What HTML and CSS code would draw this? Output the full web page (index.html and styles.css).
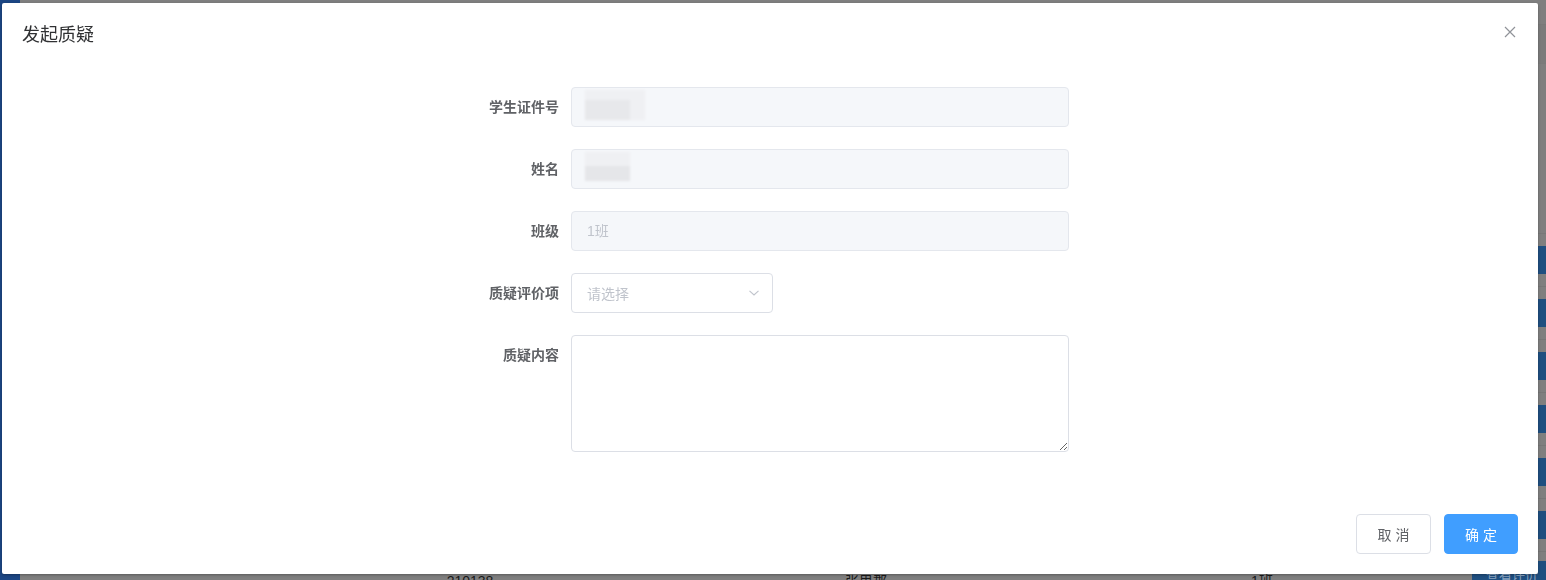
FILE: index.html
```html
<!DOCTYPE html>
<html lang="zh-CN">
<head>
<meta charset="utf-8">
<title>发起质疑</title>
<link rel="stylesheet" href="styles.css">
</head>
<body>
<div class="app">
  <aside class="sidebar"></aside>
  <main class="content">
    <div class="topbar"></div>
    <div class="thead"></div>
    <div class="spacer"></div>
    <div class="rows">
      <div class="row"><span class="cell c1"></span><span class="cell c2"></span><span class="cell c3"></span><span class="cell op"><span class="row-btn">查看评价</span></span></div>
      <div class="row"><span class="cell c1"></span><span class="cell c2"></span><span class="cell c3"></span><span class="cell op"><span class="row-btn">查看评价</span></span></div>
      <div class="row"><span class="cell c1"></span><span class="cell c2"></span><span class="cell c3"></span><span class="cell op"><span class="row-btn">查看评价</span></span></div>
      <div class="row"><span class="cell c1"></span><span class="cell c2"></span><span class="cell c3"></span><span class="cell op"><span class="row-btn">查看评价</span></span></div>
      <div class="row"><span class="cell c1"></span><span class="cell c2"></span><span class="cell c3"></span><span class="cell op"><span class="row-btn">查看评价</span></span></div>
      <div class="row"><span class="cell c1"></span><span class="cell c2"></span><span class="cell c3"></span><span class="cell op"><span class="row-btn">查看评价</span></span></div>
      <div class="row row-last"><span class="cell c1">210138</span><span class="cell c2">张思郡</span><span class="cell c3">1班</span><span class="cell op"><span class="row-btn">查看评价</span></span></div>
    </div>
  </main>
</div>

<div class="modal">
  <div class="dialog">
    <header class="dlg-header">
      <span class="dlg-title">发起质疑</span>
      <button class="dlg-close" type="button" aria-label="关闭">
        <svg width="16" height="16" viewBox="0 0 16 16"><path d="M3 3 L13 13 M13 3 L3 13" stroke="#909399" stroke-width="1.2" fill="none"/></svg>
      </button>
    </header>
    <div class="dlg-body">
      <form class="form">
        <div class="form-item">
          <label class="label">学生证件号</label>
          <div class="input disabled"><span class="redact redact-a"></span></div>
        </div>
        <div class="form-item">
          <label class="label">姓名</label>
          <div class="input disabled"><span class="redact redact-b"></span></div>
        </div>
        <div class="form-item">
          <label class="label">班级</label>
          <div class="input disabled"><span class="value">1班</span></div>
        </div>
        <div class="form-item">
          <label class="label">质疑评价项</label>
          <div class="select">
            <span class="placeholder">请选择</span>
            <svg class="chevron" width="12" height="8" viewBox="0 0 12 8"><path d="M1.5 1.8 L6 6 L10.5 1.8" stroke="#c0c4cc" stroke-width="1.1" fill="none"/></svg>
          </div>
        </div>
        <div class="form-item">
          <label class="label">质疑内容</label>
          <textarea class="textarea"></textarea>
        </div>
      </form>
    </div>
    <footer class="dlg-footer">
      <button class="btn btn-default" type="button">取 消</button>
      <button class="btn btn-primary" type="button">确 定</button>
    </footer>
  </div>
</div>
</body>
</html>
```

FILE: styles.css
```css
html, body {
  margin: 0;
  padding: 0;
}

body {
  width: 1546px;
  height: 580px;
  overflow: hidden;
  background: #7f7f7f;
  font-family: "Liberation Sans", "Noto Sans CJK SC", sans-serif;
}

.app {
  display: flex;
  height: 580px;
  overflow: hidden;
}

.sidebar {
  width: 20px;
  flex: none;
  background: #1c4684;
}

.content {
  flex: 1;
  display: flex;
  flex-direction: column;
  background: #7f7f7f;
}

.content > * {
  flex: none;
}

.topbar {
  height: 24px;
}

.thead {
  height: 38px;
  border-top: 1px solid #797979;
  border-bottom: 1px solid #7a7a7a;
  background: #7b7b7b;
}

.spacer {
  height: 169px;
  border-bottom: 1px solid #787878;
}

.rows {
  display: flex;
  flex-direction: column;
}

.row {
  flex: none;
  height: 52px;
  border-bottom: 1px solid #777777;
  display: grid;
  grid-template-columns: 255px 390px 402px 390px 1fr;
  align-items: start;
  color: #1a1a1a;
  font-size: 14px;
}

.row .c1 { grid-column: 2; }
.row .c2 { grid-column: 3; }
.row .c3 { grid-column: 4; }
.row .op { grid-column: 5; }

.cell {
  text-align: center;
  line-height: 20px;
  padding-top: 10px;
}

.op {
  text-align: left;
  padding: 12px 0 0 15px;
}

.row-btn {
  display: inline-block;
  width: 90px;
  height: 28px;
  line-height: 28px;
  background: #1f4f80;
  color: #8aa4c0;
  font-size: 13px;
  text-align: left;
  padding-left: 14px;
  box-sizing: border-box;
  white-space: nowrap;
}

.row-last {
  margin-top: 9px;
}

.row-last .op {
  padding-top: 0;
}

/* modal */
.modal {
  position: fixed;
  top: 3px;
  left: 2px;
  width: 1536px;
  height: 571px;
}

.dialog {
  height: 100%;
  background: #ffffff;
  border-radius: 2px;
  box-shadow: 0 1px 3px rgba(0, 0, 0, 0.3);
  display: flex;
  flex-direction: column;
  box-sizing: border-box;
}

.dlg-header {
  position: relative;
  padding: 20px 20px 10px;
  height: 24px;
}

.dlg-title {
  font-size: 18px;
  line-height: 24px;
  color: #303133;
}

.dlg-close {
  position: absolute;
  top: 21px;
  right: 20px;
  width: 16px;
  height: 16px;
  padding: 0;
  border: 0;
  background: transparent;
  display: flex;
}

.dlg-body {
  padding: 30px 20px;
}

.form {
  width: 598px;
  margin: 0 auto;
}

.form-item {
  display: flex;
  margin-bottom: 22px;
}

.label {
  width: 100px;
  flex: none;
  box-sizing: border-box;
  padding-right: 12px;
  text-align: right;
  line-height: 40px;
  font-size: 14px;
  font-weight: 700;
  color: #606266;
}

.input {
  width: 498px;
  height: 40px;
  box-sizing: border-box;
  border: 1px solid #e4e7ed;
  border-radius: 4px;
  background: #f5f7fa;
  padding: 0 15px;
  display: flex;
  align-items: center;
  font-size: 14px;
}

.input .value {
  color: #c0c4cc;
  line-height: 38px;
}

.redact {
  display: block;
  align-self: flex-start;
  margin-left: -2px;
  margin-top: 2px;
  filter: blur(1px);
}

.redact-a {
  width: 60px;
  height: 30px;
  background:
    linear-gradient(#eff0f3, #eff0f3) 0 0 / 60px 10px no-repeat,
    linear-gradient(#e7e8eb, #e7e8eb) 0 10px / 45px 20px no-repeat,
    linear-gradient(#eff0f3, #eff0f3) 45px 10px / 15px 20px no-repeat;
}

.redact-b {
  width: 45px;
  height: 29px;
  background:
    linear-gradient(#eff0f3, #eff0f3) 0 0 / 45px 14px no-repeat,
    linear-gradient(#e5e6e9, #e5e6e9) 0 14px / 45px 15px no-repeat;
}

.select {
  width: 202px;
  height: 40px;
  box-sizing: border-box;
  border: 1px solid #dcdfe6;
  border-radius: 4px;
  background: #ffffff;
  padding: 0 12px 0 15px;
  display: flex;
  align-items: center;
  justify-content: space-between;
  font-size: 14px;
}

.placeholder {
  color: #c0c4cc;
  margin-top: -1px;
}

.chevron {
  margin-top: 0;
}

.textarea {
  width: 498px;
  height: 117px;
  box-sizing: border-box;
  border: 1px solid #dcdfe6;
  border-radius: 4px;
  padding: 5px 15px;
  resize: vertical;
  font-family: inherit;
  font-size: 14px;
  color: #606266;
  outline: none;
  margin: 0;
}

.dlg-footer {
  margin-top: auto;
  padding: 10px 20px 20px;
  display: flex;
  justify-content: flex-end;
  gap: 13px;
}

.btn {
  height: 40px;
  box-sizing: border-box;
  border-radius: 4px;
  font-family: inherit;
  font-size: 14px;
  padding: 0;
  cursor: pointer;
}

.btn-default {
  width: 75px;
  border: 1px solid #dcdfe6;
  background: #ffffff;
  color: #606266;
}

.btn-primary {
  width: 74px;
  border: 1px solid #409eff;
  background: #409eff;
  color: #ffffff;
}
```
